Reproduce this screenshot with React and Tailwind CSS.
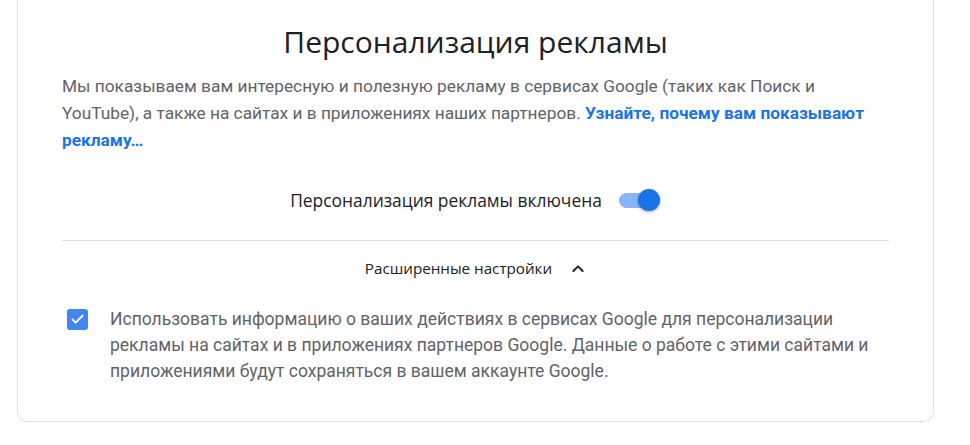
import { Check } from 'lucide-react'

const heading = { fontFamily: '"Open Sans", "Noto Sans", sans-serif' }
const body = { fontFamily: 'Roboto, "Liberation Sans", sans-serif' }

function Toggle({ on }) {
  return (
    <div className="relative w-[42px] h-[24px] flex items-center">
      <div className={`w-[36px] h-[15px] rounded-full ${on ? 'bg-[#8ab4f8]' : 'bg-[#bdc1c6]'}`} />
      <div
        className={`absolute top-[1px] w-[22px] h-[22px] rounded-full shadow-[0_1px_3px_rgba(0,0,0,0.35)] ${
          on ? 'left-[19px] bg-[#1a73e8]' : 'left-0 bg-white'
        }`}
      />
    </div>
  )
}

export default function App() {
  return (
    <div className="w-[970px] h-[445px] bg-white overflow-hidden">
      <div className="ml-[17px] w-[917px] border border-t-0 border-[#e0e0e4] rounded-b-[10px] px-[44px] pt-[22px] pb-[37px]">
        <h1 className="text-center text-[30px] leading-[40px] text-[#202124]" style={heading}>
          Персонализация рекламы
        </h1>
        <p className="mt-[11px] text-[17.3px] leading-[27px] text-[#5f6368]" style={body}>
          Мы показываем вам интересную и полезную рекламу в сервисах Google (таких как Поиск и YouTube), а также на сайтах и в приложениях наших партнеров.{' '}
          <a className="font-bold text-[#1a73e8]">Узнайте, почему вам показывают рекламу…</a>
        </p>

        <div className="mt-[33px] flex items-center justify-center gap-[17px]">
          <span className="text-[17.4px] font-medium text-[#202124]" style={heading}>
            Персонализация рекламы включена
          </span>
          <Toggle on />
        </div>

        <div className="mt-[27px] border-t border-[#e0e0e4]" />

        <div className="mt-[16px] flex items-center justify-center gap-[18px]">
          <span className="text-[15.2px] font-medium text-[#202124]" style={heading}>
            Расширенные настройки
          </span>
          <svg width="16" height="16" viewBox="0 0 24 24" fill="none" stroke="#202124" strokeWidth="3" strokeLinecap="round" strokeLinejoin="round">
            <path d="M5 15l7-7 7 7" />
          </svg>
        </div>

        <div className="mt-[26px] flex items-start gap-[22px] pl-[5px]">
          <div className="mt-[3px] w-[21px] h-[21px] rounded-[3px] bg-[#4285f4] flex items-center justify-center shrink-0">
            <Check className="w-[15px] h-[15px] text-white" strokeWidth={3} />
          </div>
          <p className="text-[17.5px] leading-[26px] text-[#5f6368]" style={body}>
            Использовать информацию о ваших действиях в сервисах Google для персонализации рекламы на сайтах и в приложениях партнеров Google. Данные о работе с этими сайтами и приложениями будут сохраняться в вашем аккаунте Google.
          </p>
        </div>
      </div>
    </div>
  )
}
